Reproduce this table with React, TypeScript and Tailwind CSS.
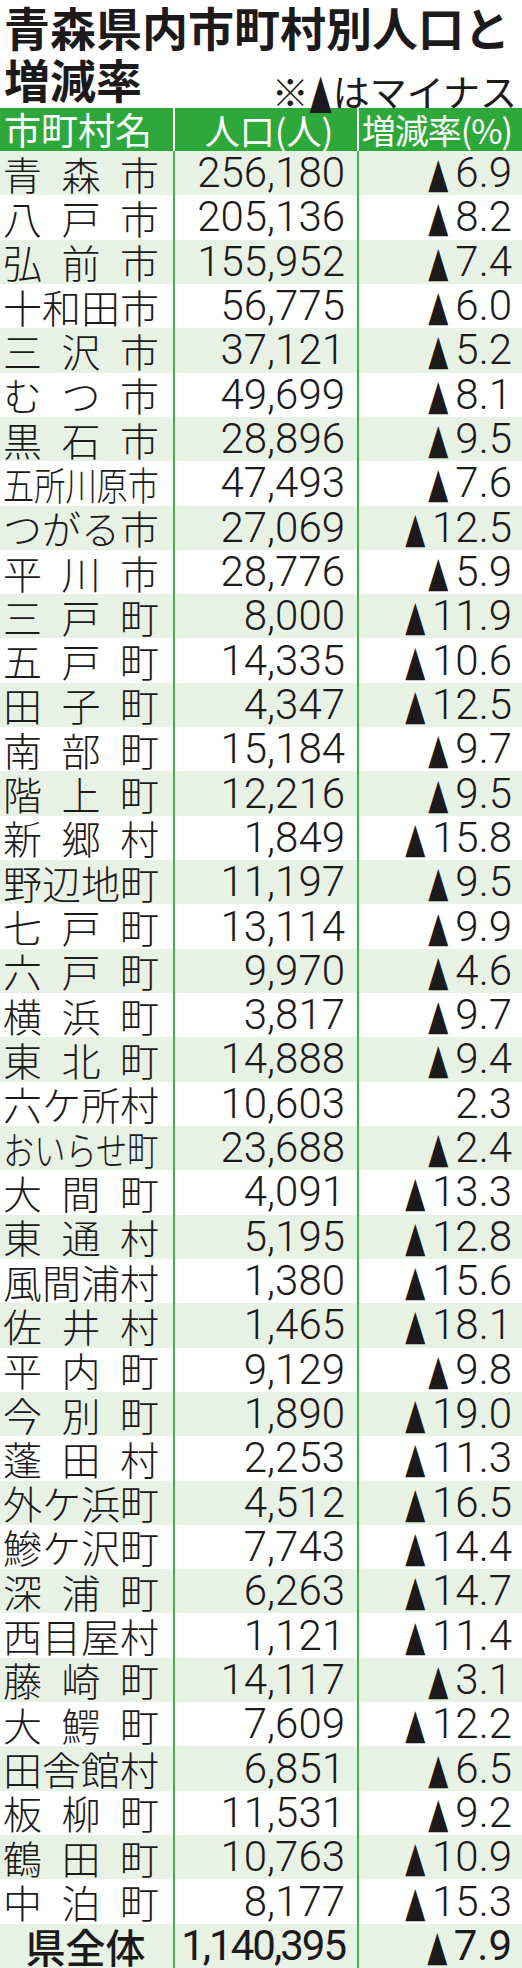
import React from "react";

const rows: [string, string, string][] = [
  ["青森市", "256,180", "▲6.9"],
  ["八戸市", "205,136", "▲8.2"],
  ["弘前市", "155,952", "▲7.4"],
  ["十和田市", "56,775", "▲6.0"],
  ["三沢市", "37,121", "▲5.2"],
  ["むつ市", "49,699", "▲8.1"],
  ["黒石市", "28,896", "▲9.5"],
  ["五所川原市", "47,493", "▲7.6"],
  ["つがる市", "27,069", "▲12.5"],
  ["平川市", "28,776", "▲5.9"],
  ["三戸町", "8,000", "▲11.9"],
  ["五戸町", "14,335", "▲10.6"],
  ["田子町", "4,347", "▲12.5"],
  ["南部町", "15,184", "▲9.7"],
  ["階上町", "12,216", "▲9.5"],
  ["新郷村", "1,849", "▲15.8"],
  ["野辺地町", "11,197", "▲9.5"],
  ["七戸町", "13,114", "▲9.9"],
  ["六戸町", "9,970", "▲4.6"],
  ["横浜町", "3,817", "▲9.7"],
  ["東北町", "14,888", "▲9.4"],
  ["六ケ所村", "10,603", "2.3"],
  ["おいらせ町", "23,688", "▲2.4"],
  ["大間町", "4,091", "▲13.3"],
  ["東通村", "5,195", "▲12.8"],
  ["風間浦村", "1,380", "▲15.6"],
  ["佐井村", "1,465", "▲18.1"],
  ["平内町", "9,129", "▲9.8"],
  ["今別町", "1,890", "▲19.0"],
  ["蓬田村", "2,253", "▲11.3"],
  ["外ケ浜町", "4,512", "▲16.5"],
  ["鰺ケ沢町", "7,743", "▲14.4"],
  ["深浦町", "6,263", "▲14.7"],
  ["西目屋村", "1,121", "▲11.4"],
  ["藤崎町", "14,117", "▲3.1"],
  ["大鰐町", "7,609", "▲12.2"],
  ["田舎館村", "6,851", "▲6.5"],
  ["板柳町", "11,531", "▲9.2"],
  ["鶴田町", "10,763", "▲10.9"],
  ["中泊町", "8,177", "▲15.3"],
];

function Name({ n }: { n: string }) {
  const chars = Array.from(n);
  if (chars.length === 3) {
    return (
      <div className="flex w-full justify-between pl-[3px] pr-[14px]">
        {chars.map((c, i) => (
          <span key={i}>{c}</span>
        ))}
      </div>
    );
  }
  if (chars.length === 4) {
    return <div className="whitespace-nowrap pl-[3px]">{n}</div>;
  }
  return (
    <div className="pl-[3px]">
      <span className="inline-block origin-left scale-x-[0.8] whitespace-nowrap">{n}</span>
    </div>
  );
}

function Tri() {
  return (
    <span className="mr-[8px] inline-flex w-[18px] justify-center">
      <span className="inline-block shrink-0 scale-x-[0.62] font-['DejaVu_Sans',sans-serif] text-[42px] leading-none">
        ▲
      </span>
    </span>
  );
}

function Pct({ v, total }: { v: string; total?: boolean }) {
  const neg = v.startsWith("▲");
  const num = neg ? v.slice(1) : v;
  return (
    <div className="flex items-baseline justify-end">
      {neg && <Tri />}
      <span className={total ? "font-normal" : "font-light"}>{num}</span>
    </div>
  );
}

export default function App() {
  return (
    <div className="w-[522px] bg-white text-[#1c1a1a] font-['Noto_Sans_CJK_JP',sans-serif]">
      {/* Title */}
      <div className="h-[108px]">
        <div className="h-[54px] whitespace-nowrap pl-[4px] pt-[3px] text-[46px] font-bold leading-[46px]">
          青森県内市町村別人口と
        </div>
        <div className="flex h-[54px] items-start justify-between pl-[4px] pr-[5px]">
          <span className="mt-[1px] text-[46px] font-bold leading-[46px]">増減率</span>
          <span className="mt-[12px] flex items-baseline whitespace-nowrap text-[37px] leading-[37px]">
            <span>※</span>
            <span className="mx-[2px] inline-flex w-[20px] justify-center">
              <span className="inline-block shrink-0 scale-x-[0.6] font-['DejaVu_Sans',sans-serif] text-[48px] leading-none">
                ▲
              </span>
            </span>
            <span>はマイナス</span>
          </span>
        </div>
      </div>

      {/* Header */}
      <div className="flex h-[43px] items-center bg-[#2fa83b] text-[37px] leading-none text-white">
        <div className="flex h-full w-[175px] items-center whitespace-nowrap border-r-2 border-white pl-[4px]">
          市町村名
        </div>
        <div className="flex h-full w-[184px] items-center justify-center whitespace-nowrap border-r-2 border-white pl-[6px] text-[35px]">
          人口(人)
        </div>
        <div className="flex h-full flex-1 items-center justify-end whitespace-nowrap pr-[10px] text-[34px] tracking-[-1px]">
          増減率(%)
        </div>
      </div>

      {/* Body */}
      <div className="grid h-[1817px] grid-rows-[repeat(41,minmax(0,1fr))]">
        {rows.map(([n, p, r], i) => (
          <div
            key={n}
            className={`flex ${i % 2 === 0 ? "bg-[#e7f1e4]" : "bg-white"}`}
          >
            <div className="flex w-[175px] items-center border-r-2 border-[#46b04f] text-[39px] font-light leading-none">
              <Name n={n} />
            </div>
            <div className="flex w-[184px] items-center justify-end border-r-2 border-[#46b04f] pr-[12px] font-['Roboto',sans-serif] text-[42px] font-light leading-none">
              {p}
            </div>
            <div className="flex flex-1 items-center justify-end pr-[10px] font-['Roboto',sans-serif] text-[42px] leading-none">
              <Pct v={r} />
            </div>
          </div>
        ))}
        <div className="flex bg-[#e7f1e4]">
          <div className="flex w-[175px] items-center justify-center border-r-2 border-[#46b04f] pr-[2px] text-[40px] font-medium leading-none">
            県全体
          </div>
          <div className="flex w-[184px] items-center justify-end border-r-2 border-[#46b04f] pr-[12px] font-['Roboto',sans-serif] text-[42px] font-normal leading-none tracking-[-2px]">
            1,140,395
          </div>
          <div className="flex flex-1 items-center justify-end pr-[10px] font-['Roboto',sans-serif] text-[42px] leading-none">
            <Pct v="▲7.9" total />
          </div>
        </div>
      </div>
    </div>
  );
}
